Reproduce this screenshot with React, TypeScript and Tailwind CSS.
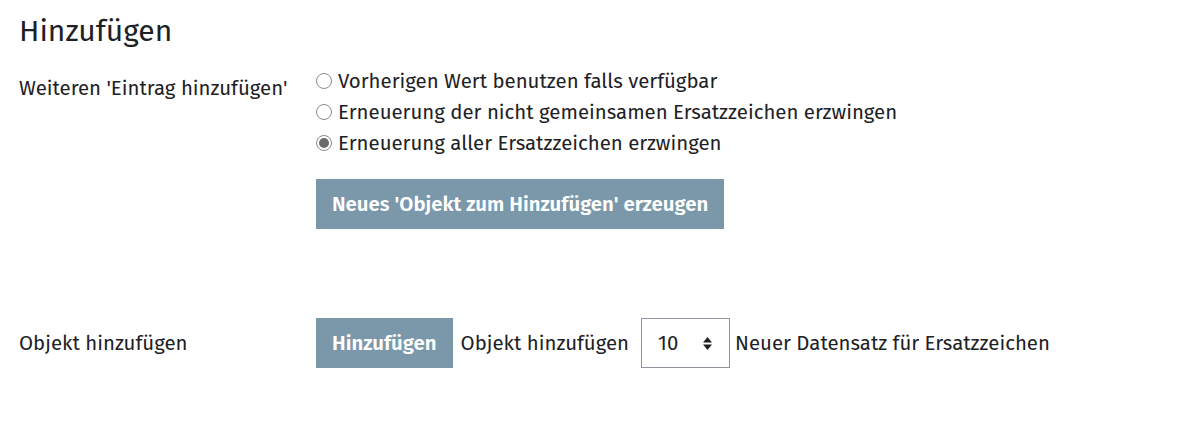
import React, { useState } from "react";

const options = [
  "Vorherigen Wert benutzen falls verfügbar",
  "Erneuerung der nicht gemeinsamen Ersatzzeichen erzwingen",
  "Erneuerung aller Ersatzzeichen erzwingen",
];

function Radio({ checked }: { checked: boolean }) {
  return (
    <span className="w-[16px] h-[16px] rounded-full border border-[#8a8a8a] bg-white flex items-center justify-center shrink-0">
      {checked && <span className="w-[10px] h-[10px] rounded-full bg-[#6b6b6b]" />}
    </span>
  );
}

export default function App() {
  const [choice, setChoice] = useState(2);

  return (
    <div className="w-[1200px] h-[424px] bg-white text-[#1d2125] font-['Fira_Sans','Noto_Sans',sans-serif] pl-[19px]">
      <h2 className="text-[30px] leading-none pt-[16px] font-normal">Hinzufügen</h2>

      <div className="flex mt-[23px]">
        <div className="w-[297px] text-[20.4px] leading-[24px] pt-[7px]">Weiteren 'Eintrag hinzufügen'</div>
        <div className="flex flex-col">
          <div className="flex flex-col gap-[7px]">
            {options.map((o, i) => (
              <label key={o} className="flex items-center gap-[6px] h-[24px] text-[20.4px] cursor-pointer" onClick={() => setChoice(i)}>
                <Radio checked={choice === i} />
                <span>{o}</span>
              </label>
            ))}
          </div>
          <button className="mt-[24px] self-start h-[50px] px-[16px] bg-[#7a98aa] text-white text-[20.4px] font-semibold">
            Neues 'Objekt zum Hinzufügen' erzeugen
          </button>
        </div>
      </div>

      <div className="flex items-center mt-[89px]">
        <div className="w-[297px] text-[20.4px]">Objekt hinzufügen</div>
        <button className="h-[50px] px-[16px] bg-[#7a98aa] text-white text-[20.4px] font-semibold">Hinzufügen</button>
        <span className="ml-[8px] text-[20.4px]">Objekt hinzufügen</span>
        <div className="ml-[12px] w-[89px] h-[50px] border border-[#8f959e] flex items-center justify-between pl-[16px] pr-[16px] text-[20.4px]">
          <span>10</span>
          <svg width="11" height="15" viewBox="0 0 11 15">
            <path d="M5.5 1 L10 6.5 H1 Z" fill="#1d2125" />
            <path d="M5.5 14 L10 8.5 H1 Z" fill="#1d2125" />
          </svg>
        </div>
        <span className="ml-[5px] text-[20.4px]">Neuer Datensatz für Ersatzzeichen</span>
      </div>
    </div>
  );
}
